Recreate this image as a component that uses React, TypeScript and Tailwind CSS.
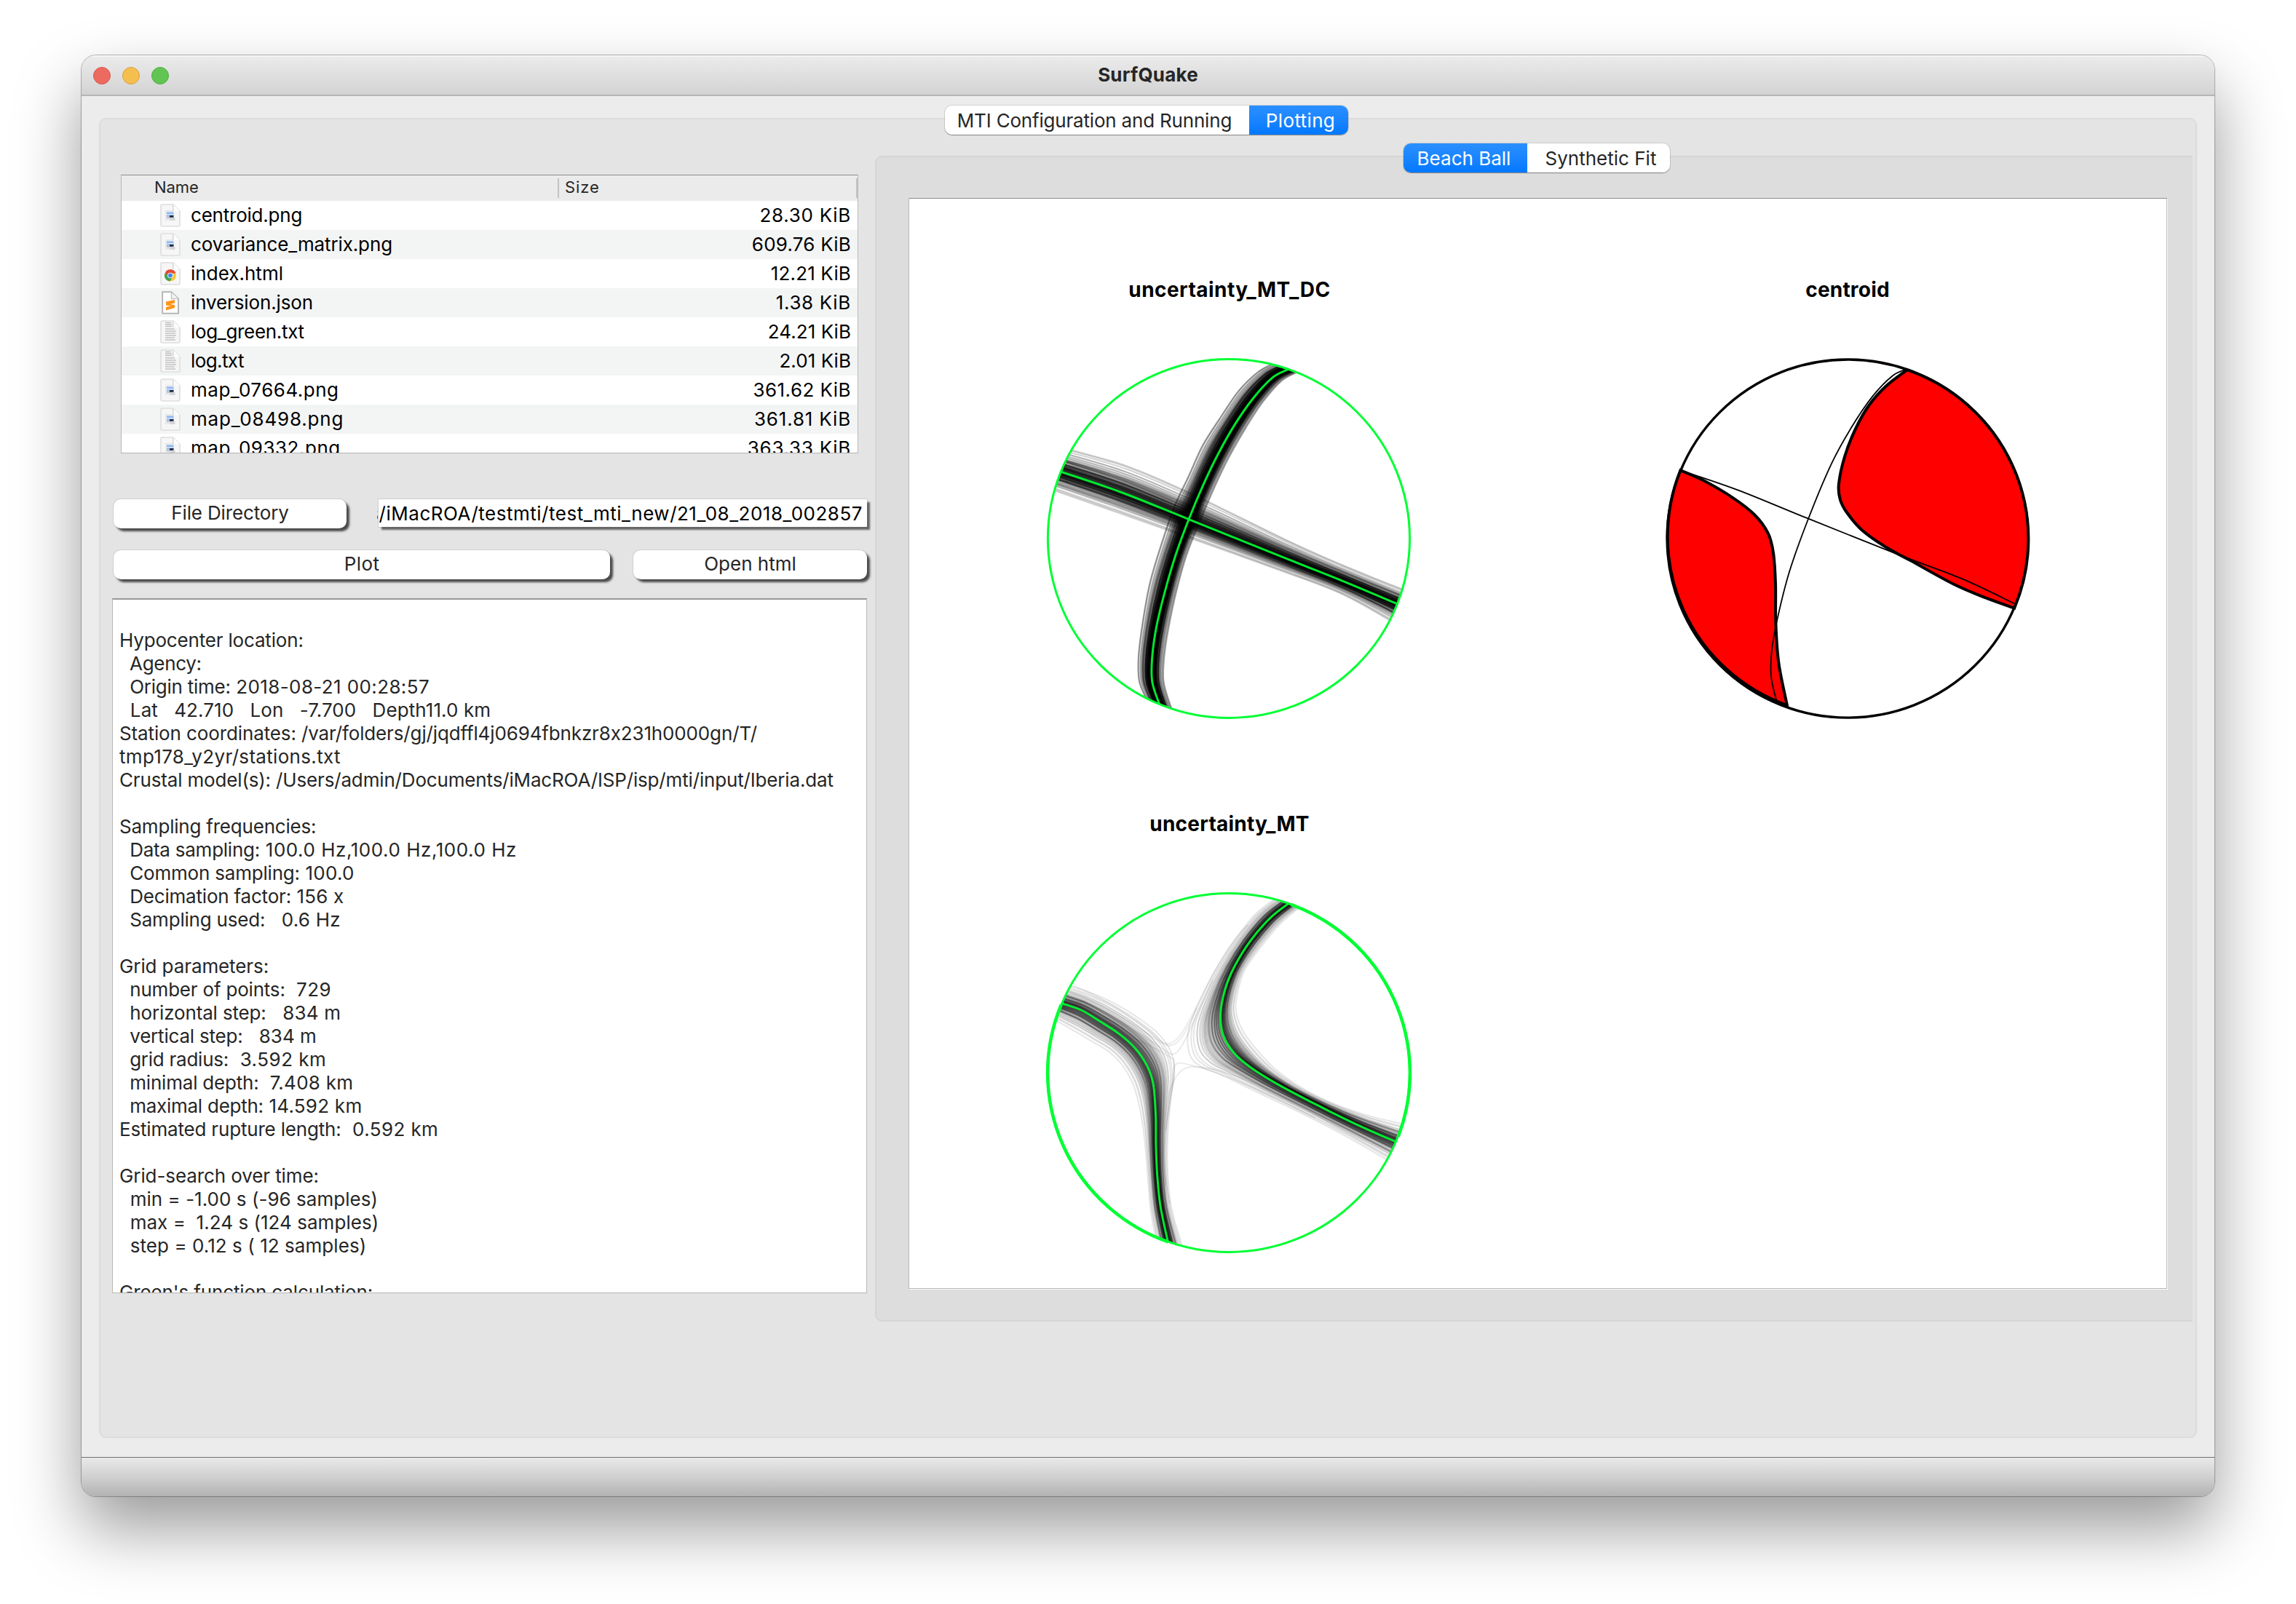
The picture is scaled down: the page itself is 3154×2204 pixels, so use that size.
import React from "react";

type Point = [number, number];

/* ---------- geometry helpers ---------- */

// Smooth path through a list of points (Catmull-Rom converted to cubic Béziers).
function smooth(points: Point[], start = "M"): string {
  let d = `${start}${points[0][0].toFixed(1)} ${points[0][1].toFixed(1)}`;
  for (let i = 0; i < points.length - 1; i++) {
    const p0 = points[Math.max(i - 1, 0)];
    const p1 = points[i];
    const p2 = points[i + 1];
    const p3 = points[Math.min(i + 2, points.length - 1)];
    const c1 = [p1[0] + (p2[0] - p0[0]) / 6, p1[1] + (p2[1] - p0[1]) / 6];
    const c2 = [p2[0] - (p3[0] - p1[0]) / 6, p2[1] - (p3[1] - p1[1]) / 6];
    d += `C${c1[0].toFixed(1)} ${c1[1].toFixed(1)} ${c2[0].toFixed(1)} ${c2[1].toFixed(1)} ${p2[0].toFixed(1)} ${p2[1].toFixed(1)}`;
  }
  return d;
}

interface Bundle {
  center: Point[];
  a: Point[];
  b: Point[];
  spread: number;
  count: number;
  opacity: number;
}

// Family of solutions, bell-shaped between the two edges of a bundle.
function family({ center, a, b, spread, count }: Bundle): string[] {
  const out: string[] = [];
  for (let i = 0; i < count; i++) {
    const p = (i + 0.5) / count;
    const jitter = Math.sin(i * 78.233) * 0.03;
    const s = Math.max(-1.02, Math.min(1.02, spread * Math.log(p / (1 - p)) + jitter));
    const tilt = Math.sin(i * 12.9898) * 0.2;
    const pts = center.map((c, k): Point => {
      const t = s + tilt * (k / (center.length - 1) - 0.5) * (1 - Math.min(1, Math.abs(s)));
      const edge = t < 0 ? a[k] : b[k];
      const m = Math.abs(t);
      return [c[0] + (edge[0] - c[0]) * m, c[1] + (edge[1] - c[1]) * m];
    });
    out.push(smooth(pts));
  }
  return out;
}

const dcBundles: Bundle[] = [
  {
    center: [[120, 676], [160, 686], [380, 752], [630, 840], [1000, 971], [1200, 1041], [1406, 1117], [1440, 1130]],
    a: [[130, 600], [180, 612], [400, 668], [640, 758], [1000, 912], [1200, 990], [1420, 1068], [1450, 1074]],
    b: [[110, 738], [140, 748], [360, 815], [620, 896], [1000, 1016], [1200, 1084], [1385, 1174], [1420, 1200]],
    spread: 0.21,
    count: 170,
    opacity: 0.17,
  },
  {
    center: [[1030, 340], [995, 352], [940, 378], [868, 446], [800, 532], [740, 625], [685, 725], [630, 840], [580, 960], [540, 1080], [510, 1190], [494, 1290], [494, 1370], [520, 1442], [530, 1465]],
    a: [[980, 318], [945, 332], [890, 358], [817, 420], [743, 515], [682, 600], [630, 700], [577, 800], [526, 930], [486, 1050], [459, 1180], [444, 1290], [447, 1370], [475, 1430], [487, 1460]],
    b: [[1070, 340], [1035, 358], [975, 387], [905, 456], [842, 540], [780, 635], [725, 735], [667, 855], [620, 960], [582, 1080], [553, 1200], [538, 1290], [536, 1370], [563, 1452], [578, 1480]],
    spread: 0.22,
    count: 200,
    opacity: 0.2,
  },
];

const mtBundles: Bundle[] = [
  {
    center: [[1030, 340], [1005, 357], [935, 405], [860, 480], [800, 565], [765, 640], [748, 720], [758, 790], [800, 850], [860, 895], [960, 950], [1100, 1015], [1250, 1080], [1400, 1138], [1440, 1150]],
    a: [[975, 325], [945, 348], [875, 398], [803, 478], [735, 570], [680, 665], [632, 770], [635, 850], [675, 890], [745, 916], [880, 973], [1040, 1040], [1210, 1117], [1370, 1197], [1410, 1217]],
    b: [[1070, 350], [1037, 375], [970, 425], [898, 500], [838, 575], [812, 645], [804, 710], [832, 780], [893, 850], [962, 910], [1065, 970], [1180, 1018], [1300, 1054], [1420, 1080], [1450, 1086]],
    spread: 0.2,
    count: 150,
    opacity: 0.1,
  },
  {
    center: [[120, 674], [158, 686], [230, 708], [300, 745], [370, 785], [430, 832], [475, 890], [498, 950], [507, 1050], [508, 1150], [513, 1250], [525, 1350], [552, 1462], [560, 1485]],
    a: [[150, 611], [185, 628], [270, 654], [350, 686], [430, 728], [512, 783], [562, 845], [575, 915], [562, 1000], [552, 1100], [550, 1220], [564, 1350], [604, 1475], [614, 1500]],
    b: [[100, 722], [136, 740], [208, 776], [277, 812], [337, 844], [382, 884], [422, 944], [445, 1010], [461, 1090], [471, 1170], [480, 1270], [489, 1360], [507, 1450], [512, 1475]],
    spread: 0.2,
    count: 150,
    opacity: 0.1,
  },
];

const strays = [
  "M200 628C330 672 470 760 530 812C590 850 640 720 720 590C760 530 800 470 850 430",
  "M190 650C330 690 480 790 545 822C590 835 620 780 660 700",
  "M170 655C340 710 470 800 560 850C580 860 600 835 625 790C650 740 690 670 720 610",
  "M1380 1190C1150 1080 850 900 650 893C590 890 560 950 550 1010C530 1110 530 1230 560 1340",
  "M1100 1060C900 970 740 905 600 880C570 880 575 900 570 950C545 1060 530 1150 545 1280",
  "M430 800C500 830 560 860 575 870C580 920 560 1000 545 1100",
];

/* ---------- plots ---------- */

function UncertaintyBall({ id, cy, bundles, extra = [], greens }: { id: string; cy: number; bundles: Bundle[]; extra?: string[]; greens: number }) {
  return (
    <svg
      className="block h-[500px] w-[504px]"
      viewBox={`97.3 ${cy - 594.1} 1362.5 1187.9`}
      preserveAspectRatio="none"
      fill="none"
    >
      <clipPath id={id}>
        <ellipse cx="778.5" cy={cy} rx="673" ry="586" />
      </clipPath>
      <g clipPath={`url(#${id})`}>
        {bundles.map((bundle, k) => (
          <g key={k} stroke="#000" strokeOpacity={bundle.opacity}>
            {family(bundle).map((d, i) => (
              <path key={i} d={d} strokeWidth="2" vectorEffect="non-scaling-stroke" />
            ))}
          </g>
        ))}
        {extra.map((d) => (
          <path key={d} d={d} stroke="#000" strokeOpacity="0.08" strokeWidth="2" vectorEffect="non-scaling-stroke" />
        ))}
        {bundles.map((bundle, k) => (
          <path key={k} d={smooth(bundle.center)} stroke="#00f332" strokeOpacity="0.95" strokeWidth="3" vectorEffect="non-scaling-stroke" />
        ))}
      </g>
      <ellipse cx="778.5" cy={cy} rx="672" ry="585.5" stroke="#00ff33" strokeWidth="3" vectorEffect="non-scaling-stroke" />
      {greens > 1 && (
        <g stroke="#00ff33" strokeWidth="4.5">
          <path d={`M1010 ${cy - 549}A672 585.5 0 0 1 1408 ${cy + 208}`} vectorEffect="non-scaling-stroke" />
          <path d={`M553 ${cy + 552}A672 585.5 0 0 1 156 ${cy - 222}`} vectorEffect="non-scaling-stroke" />
        </g>
      )}
    </svg>
  );
}

const redRight: Point[] = [[1027, 352], [950, 404], [885, 468], [835, 545], [795, 635], [773, 725], [778, 775], [803, 818], [860, 876], [950, 932], [1040, 975], [1200, 1052], [1320, 1097], [1425, 1130]];
const redLeft: Point[] = [[185, 680], [270, 713], [380, 770], [460, 825], [510, 885], [530, 950], [538, 1050], [539, 1180], [550, 1310], [581, 1447]];

function CentroidBall() {
  return (
    <svg
      className="block h-[500px] w-[504px]"
      viewBox="124.4 308.9 1362.5 1187.9"
      preserveAspectRatio="none"
      fill="none"
      stroke="#000"
    >
      <ellipse cx="806" cy="903" rx="670.5" ry="584.5" strokeWidth="3.4" vectorEffect="non-scaling-stroke" />
      <path d={`${smooth(redRight)}A670.5 584.5 0 0 0 1027 352Z`} fill="#f00" strokeWidth="4" vectorEffect="non-scaling-stroke" />
      <path d={`${smooth(redLeft)}A670.5 584.5 0 0 1 185 680Z`} fill="#f00" strokeWidth="4" vectorEffect="non-scaling-stroke" />
      <path d={smooth([[185, 680], [400, 745], [660, 838], [1000, 957], [1230, 1034], [1425, 1115]])} strokeWidth="1.8" vectorEffect="non-scaling-stroke" />
      <path
        d={smooth([[1027, 350], [975, 370], [900, 437], [820, 540], [745, 660], [660, 838], [590, 1010], [545, 1165], [524, 1270], [522, 1355], [543, 1437]])}
        strokeWidth="1.8"
        vectorEffect="non-scaling-stroke"
      />
    </svg>
  );
}

function Plot({ title, className, children }: { title: string; className: string; children: React.ReactNode }) {
  return (
    <div className="flex h-[734px] flex-col items-center">
      <h2 className={`mb-[76px] text-[28px] leading-8 font-bold text-black ${className}`}>{title}</h2>
      {children}
    </div>
  );
}

/* ---------- file icons ---------- */

function PageIcon({ kind }: { kind: string }) {
  if (kind === "sublime") {
    return (
      <svg className="size-8 shrink-0" viewBox="0 0 32 32">
        <path d="M5.2 1.2H17.5L27 10.5V30.6H5.2Z" fill="#fff" stroke="#b0b0b0" strokeWidth="1.8" />
        <path d="M17.5 1.5V10.5H27" fill="#f4f4f4" stroke="#c4c4c4" strokeWidth="1.6" />
        <path d="M10 14.5L22 12V16.5L15.5 18L22 19V23L10 26.5V22L16.5 20.3L10 19.5Z" fill="#ff9518" />
      </svg>
    );
  }
  return (
    <svg className="size-8 shrink-0" viewBox="0 0 32 32">
      <path d="M5 1H20L29 10V29Q29 31 27 31H5Q3 31 3 29V3Q3 1 5 1Z" fill="#f6f6f6" stroke="#dedede" strokeWidth="1.6" />
      {kind === "image" && (
        <>
          <path d="M9 9H20V23H9Z" fill="#e6e8ea" />
          <path d="M11 11.5H20.5V17H11Z" fill="#8fb7f3" />
          <path d="M11 14H20V15.5H11Z" fill="#d5e5fa" />
          <path d="M11 17.5H15V19.5H11Z" fill="#a9b4c4" />
          <path d="M15 16H20.5V18.8H15Z" fill="#1c2b44" />
          <path d="M14 19H22.5V23H16Z" fill="#d2d4d6" />
        </>
      )}
      {kind === "chrome" && (
        <>
          <circle cx="16" cy="18.5" r="8" fill="#fbc934" />
          <path d="M9 14.5A8 8 0 0 1 23.5 15.5H16L13 20Z" fill="#e2493b" />
          <path d="M9 14.5A8 8 0 0 0 15.5 26.5L18.5 21H13.5Z" fill="#3ea457" />
          <circle cx="16" cy="18.5" r="3.8" fill="#fff" />
          <circle cx="16" cy="18.5" r="2.9" fill="#3f86f0" />
        </>
      )}
      {kind === "text" && (
        <path
          d="M9 3.5H17M9 6H18M9 8.5H18M9 12H22M9 15H24M9 18H23M9 21H24M9 24H22M9 27H23"
          stroke="#c2c2c2"
          strokeWidth="1.5"
        />
      )}
      <path d="M20 1V10H29Z" fill="#fdfdfd" />
      <path d="M19.8 1.5V10" stroke="#cfcfcf" strokeWidth="1.3" />
    </svg>
  );
}

/* ---------- data ---------- */

const files = [
  { name: "centroid.png", size: "28.30 KiB", icon: "image", nt: "tracking-[-0.22px]", st: "tracking-[0.71px]" },
  { name: "covariance_matrix.png", size: "609.76 KiB", icon: "image", nt: "tracking-[-0.12px]", st: "tracking-[0.21px]" },
  { name: "index.html", size: "12.21 KiB", icon: "chrome", nt: "tracking-[0.02px]", st: "tracking-[0.15px]" },
  { name: "inversion.json", size: "1.38 KiB", icon: "sublime", nt: "tracking-[-0.13px]", st: "tracking-[0.66px]" },
  { name: "log_green.txt", size: "24.21 KiB", icon: "text", nt: "tracking-[-0.32px]", st: "tracking-[0.04px]" },
  { name: "log.txt", size: "2.01 KiB", icon: "text", nt: "tracking-[-0.6px]", st: "tracking-[0.05px]" },
  { name: "map_07664.png", size: "361.62 KiB", icon: "image", nt: "tracking-[0.5px]", st: "tracking-[0.44px]" },
  { name: "map_08498.png", size: "361.81 KiB", icon: "image", nt: "tracking-[0.82px]", st: "tracking-[0.82px]" },
  { name: "map_09332.png", size: "363.33 KiB", icon: "image", nt: "tracking-[0.5px]", st: "tracking-[0.71px]" },
];

// [label, label tracking, value, value tracking]
const log: [string, string, string?, string?][] = [
  ["", ""],
  ["Hypocenter location:", "tracking-[-0.18px]"],
  ["  Agency:", "tracking-[-0.3px]"],
  ["  Origin time:", "tracking-[-0.25px]", " 2018-08-21 00:28:57", "tracking-[0.38px]"],
  ["  Lat   42.710   Lon   -7.700   Depth11.0 km", "tracking-[0.1px]"],
  ["Station coordinates:", "tracking-[-0.12px]", " /var/folders/gj/jqdffl4j0694fbnkzr8x231h0000gn/T/", "tracking-[-0.14px]"],
  ["tmp178_y2yr/stations.txt", "tracking-[0.32px]"],
  ["Crustal model(s): /Users/admin/Documents/iMacROA/ISP/isp/mti/input/Iberia.dat", "tracking-[-0.16px]"],
  ["", ""],
  ["Sampling frequencies:", "tracking-[-0.21px]"],
  ["  Data sampling:", "tracking-[-0.25px]", " 100.0 Hz,100.0 Hz,100.0 Hz", "tracking-[0.53px]"],
  ["  Common sampling:", "tracking-[-0.2px]", " 100.0", "tracking-[0.25px]"],
  ["  Decimation factor:", "tracking-[-0.2px]", " 156 x", "tracking-[0.2px]"],
  ["  Sampling used:", "tracking-[-0.2px]", "   0.6 Hz", "tracking-[0.2px]"],
  ["", ""],
  ["Grid parameters:", "tracking-[-0.1px]"],
  ["  number of points:", "tracking-[-0.2px]", "  729", "tracking-[0.4px]"],
  ["  horizontal step:", "tracking-[-0.15px]", "   834 m", "tracking-[0.2px]"],
  ["  vertical step:", "tracking-[-0.2px]", "   834 m", "tracking-[0.05px]"],
  ["  grid radius:", "tracking-[-0.25px]", "  3.592 km", "tracking-[0.5px]"],
  ["  minimal depth:", "tracking-[-0.2px]", "  7.408 km", "tracking-[0.25px]"],
  ["  maximal depth:", "tracking-[-0.25px]", " 14.592 km", "tracking-[0.25px]"],
  ["Estimated rupture length:", "tracking-[-0.18px]", "  0.592 km", "tracking-[0.4px]"],
  ["", ""],
  ["Grid-search over time:", "tracking-[-0.1px]"],
  ["  min = -1.00 s (-96 samples)", "tracking-[0.03px]"],
  ["  max =  1.24 s (124 samples)", "tracking-[0.03px]"],
  ["  step = 0.12 s ( 12 samples)", "tracking-[0.06px]"],
  ["", ""],
  ["Green's function calculation:", "tracking-[-0.13px]"],
];

/* ---------- controls ---------- */

function PushButton({ className, children }: { className: string; children: React.ReactNode }) {
  return (
    <button
      className={`h-10 rounded-[10px] bg-white pb-0.5 text-center leading-8 text-[#262626] shadow-[4px_4px_3px_#4a4a4a,0_0_0_1px_#d0d0d0] ${className}`}
    >
      {children}
    </button>
  );
}

function TabBar({ className, children }: { className: string; children: React.ReactNode }) {
  return (
    <div className={`relative flex h-10 overflow-hidden rounded-[10px] shadow-[0_1px_1px_rgba(0,0,0,0.35),0_0_0_1px_rgba(0,0,0,0.1)] ${className}`}>
      {children}
    </div>
  );
}

const tabOn = "flex items-center justify-center bg-gradient-to-b from-[#2a90ff] to-[#0078ff] text-white pt-px";
const tabOff = "flex items-center justify-center bg-white text-[#262626] pt-px";

export default function App() {
  return (
    <div className="h-[2204px] w-[3154px] overflow-hidden bg-white pt-[76px] pl-[112px] font-['Inter',sans-serif] text-[26px] text-[#262626]">
      <div className="flex h-[1980px] w-[2930px] flex-col overflow-hidden rounded-[20px] bg-[#ececec] shadow-[0_0_0_1px_rgba(0,0,0,0.27),0_44px_90px_rgba(0,0,0,0.4)]">
        {/* Title bar */}
        <header className="grid h-14 shrink-0 grid-cols-[200px_1fr_200px] items-center border-t-2 border-b-2 border-t-[#f6f6f6] border-b-[#b4b4b4] bg-gradient-to-b from-[#ebebeb] to-[#d3d3d3]">
          <div className="flex gap-4 pl-4">
            <span className="size-6 rounded-full border border-[#d8564c] bg-[#ec6a5e]" />
            <span className="size-6 rounded-full border border-[#dba03a] bg-[#f4bf4f]" />
            <span className="size-6 rounded-full border border-[#52ab3f] bg-[#61c554]" />
          </div>
          <h1 className="pb-0.5 text-center leading-8 font-bold tracking-[0.17px] text-[#262626]">SurfQuake</h1>
        </header>

        {/* Main area */}
        <main className="flex h-[1870px] shrink-0 flex-col px-6 pt-[13px]">
          <TabBar className="ml-[1162px] w-[554px] shrink-0">
            <div className={`w-[418px] pr-[7px] tracking-[-0.19px] ${tabOff}`}>MTI Configuration and Running</div>
            <div className={`w-[136px] pl-[5px] tracking-[0.35px] ${tabOn}`}>Plotting</div>
          </TabBar>

          <div className="-mt-[23px] flex h-[1814px] shrink-0 rounded-[10px] border-2 border-[#dcdcdc] bg-[#e4e4e4]">
            {/* Left column */}
            <section className="flex w-[1064px] shrink-0 flex-col pt-[76px]">
              <div className="ml-7 h-[383px] w-[1013px] shrink-0 overflow-hidden border border-t-[#8c8c8c] border-r-[#b9b9b9] border-b-[#b4b4b4] border-l-[#b9b9b9] bg-white">
                <div className="flex h-[35px] items-center bg-[#ebebeb] text-[22px]">
                  <div className="flex h-[27px] w-[601px] items-center border-r-2 border-[#c3c3c3] pb-[3px] pl-[45px] leading-8 tracking-[-0.07px]">Name</div>
                  <div className="flex h-[27px] flex-1 items-center border-r-2 border-[#c3c3c3] pb-[3px] pl-2 leading-8 tracking-[0.91px]">Size</div>
                </div>
                {files.map((f, i) => (
                  <div key={f.name} className={`flex h-10 items-center pr-[9px] pl-[51px] text-black ${i % 2 ? "bg-[#f3f5f5]" : "bg-white"}`}>
                    <PageIcon kind={f.icon} />
                    <span className={`ml-3 flex-1 leading-8 ${f.nt}`}>{f.name}</span>
                    <span className={`leading-8 ${f.st}`}>{f.size}</span>
                  </div>
                ))}
              </div>

              <div className="mt-[63px] flex h-10 shrink-0 pl-[18px]">
                <PushButton className="w-80 tracking-[-0.15px]">File Directory</PushButton>
                <div className="ml-11 h-[38px] w-[671px] bg-white shadow-[4px_4px_2px_#666,0_0_0_1px_#cfcfcf]">
                  <div className="-ml-0.5 flex h-full items-center justify-end overflow-hidden pr-[6px] tracking-[0.51px] whitespace-nowrap text-black">
                    <span>s/iMacROA/testmti/test_mti_new/21_08_2018_002857</span>
                  </div>
                </div>
              </div>

              <div className="mt-[30px] flex h-10 shrink-0 pl-[18px]">
                <PushButton className="w-[682px] tracking-[0.4px]">Plot</PushButton>
                <PushButton className="ml-8 w-[321px]">Open html</PushButton>
              </div>

              <div className="mt-[26px] ml-4 h-[955px] w-[1037px] shrink-0 overflow-hidden border border-t-2 border-t-[#979797] border-r-[#b9b9b9] border-b-[#b4b4b4] border-l-[#b9b9b9] bg-white pt-2 pl-[9px]">
                {log.map(([label, labelCls, value, valueCls], i) => (
                  <div key={i} className="h-8 leading-8 whitespace-pre">
                    <span className={labelCls}>{label}</span>
                    {value && <span className={valueCls}>{value}</span>}
                  </div>
                ))}
              </div>
            </section>

            {/* Right column */}
            <section className="flex w-[1810px] shrink-0 flex-col overflow-hidden pt-[33px]">
              <TabBar className="ml-[726px] w-[366px] shrink-0">
                <div className={`w-[170px] pr-1 ${tabOn}`}>Beach Ball</div>
                <div className={`w-[196px] pl-1.5 ${tabOff}`}>Synthetic Fit</div>
              </TabBar>
              <div className="-mt-[23px] h-[1602px] shrink-0 rounded-l-[10px] border-2 border-r-0 border-[#d5d5d5] bg-[#dddddd] pt-14 pl-11">
                <div className="grid h-[1499px] w-[1729px] grid-cols-[850px_850px] content-start border border-t-[#8c8c8c] border-r-[#b9b9b9] border-b-[#b4b4b4] border-l-[#b9b9b9] bg-white pt-[109px] pl-[14px] shadow-[1px_1px_0_#fff]">
                  <Plot title="uncertainty_MT_DC" className="pl-0.5 tracking-[0.44px]">
                    <UncertaintyBall id="ball-dc" cy={903} bundles={dcBundles} greens={1} />
                  </Plot>
                  <Plot title="centroid" className="tracking-[0.2px]">
                    <CentroidBall />
                  </Plot>
                  <Plot title="uncertainty_MT" className="pl-0.5 tracking-[0.24px]">
                    <UncertaintyBall id="ball-mt" cy={912.5} bundles={mtBundles} extra={strays} greens={2} />
                  </Plot>
                </div>
              </div>
            </section>
          </div>
        </main>

        {/* Status bar */}
        <footer className="flex-1 border-t border-t-[#6e6e6e] bg-gradient-to-b from-[#e9e9e9] via-[#d0d0d0] to-[#b2b2b2]" />
      </div>
    </div>
  );
}
